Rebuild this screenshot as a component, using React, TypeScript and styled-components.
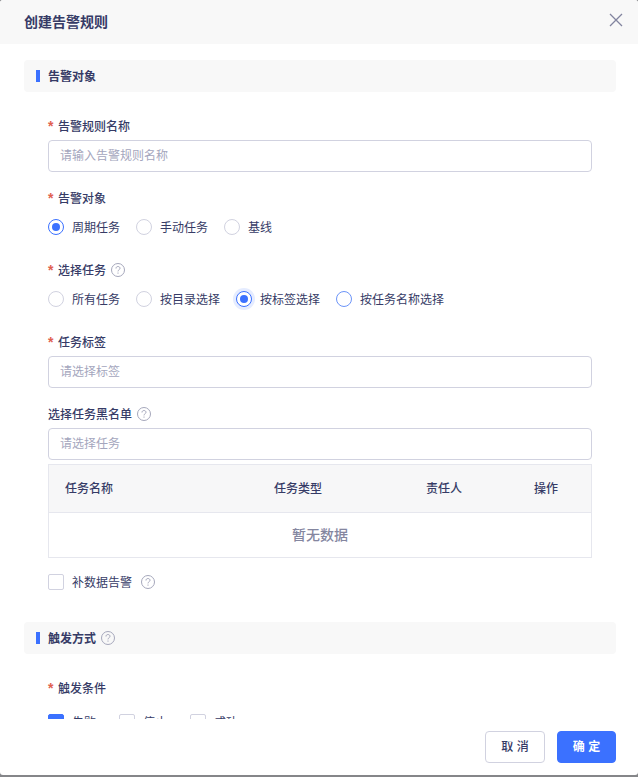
import React from "react";
import styled, { createGlobalStyle, css } from "styled-components";

const INK = "#363b66";
const BLUE = "#3b71ff";
const LINE = "#d1d2e0";

const GlobalStyle = createGlobalStyle`
  * { box-sizing: border-box; }
  body {
    margin: 0;
    background: #858689;
    color: ${INK};
    font: 400 12px/18px "Noto Sans CJK SC", sans-serif;
  }
`;

const Dialog = styled.div`
  width: 638px;
  height: 775px;
  display: flex;
  flex-direction: column;
  overflow: hidden;
  background: #fff;
  border-radius: 3px;
`;

const Header = styled.header`
  flex: 0 0 44px;
  display: flex;
  align-items: center;
  justify-content: space-between;
  padding: 0 15px 0 24px;
  background: #f8f8f8;
`;

const Title = styled.h1`
  margin: 0;
  font: 700 14px/20px "Liberation Sans", "Noto Sans CJK SC", sans-serif;
`;

const CloseButton = styled.button`
  display: flex;
  margin: 0 0 4px;
  padding: 0;
  border: 0;
  background: none;
`;

const Body = styled.main`
  flex: 1;
  min-height: 0;
  overflow: hidden;
  padding: 16px 22px 0 24px;
`;

const SectionBar = styled.h2`
  display: flex;
  align-items: center;
  height: 32px;
  margin: 0;
  padding: 0 12px;
  border-radius: 4px;
  background: #f8f8f8;
  font-size: 12px;
  font-weight: 700;

  &::before {
    content: "";
    width: 4px;
    height: 12px;
    margin-right: 8px;
    background: ${BLUE};
  }
`;

const Fields = styled.div`
  padding: 20px 24px 32px;
`;

const Field = styled.div`
  margin-bottom: 12px;
`;

const Label = styled.div`
  display: flex;
  align-items: center;
  height: 28px;
  font-weight: 500;
`;

const Star = styled.span`
  width: 10px;
  color: #e0604f;
  font: 700 14px/18px "Liberation Sans", sans-serif;
  padding-bottom: 1px;
`;

const Input = styled.input`
  display: block;
  width: 100%;
  height: 32px;
  padding: 0 11px;
  border: 1px solid ${LINE};
  border-radius: 4px;
  background: #fff;
  color: ${INK};
  font: 400 12px/18px "Liberation Sans", "Noto Sans CJK SC", sans-serif;
  outline: none;

  &::placeholder { color: #a4a6bd; opacity: 1; }
`;

const RadioRow = styled.div`
  display: flex;
  gap: 16px;
  height: 32px;
  padding-bottom: 2px;
`;

const Option = styled.label`
  display: flex;
  align-items: center;
  gap: 8px;
`;

type RadioState = "off" | "hover" | "on" | "focus";

const RadioDot = styled.span<{ $state: RadioState }>`
  display: flex;
  align-items: center;
  justify-content: center;
  width: 16px;
  height: 16px;
  border: 1px solid ${(p) => (p.$state === "off" ? LINE : p.$state === "hover" ? "#6c94f8" : BLUE)};
  border-radius: 50%;
  background: #fff;
  ${(p) => p.$state === "focus" && css`box-shadow: 0 0 0 3px #e5ecff;`}

  &::after {
    content: "";
    width: 8px;
    height: 8px;
    border-radius: 50%;
    background: ${(p) => (p.$state === "on" || p.$state === "focus" ? BLUE : "transparent")};
  }
`;

const CheckBox = styled.span<{ $checked?: boolean }>`
  width: 16px;
  height: 16px;
  border: 1px solid ${(p) => (p.$checked ? BLUE : LINE)};
  border-radius: 2px;
  background: ${(p) => (p.$checked ? BLUE : "#fff")};
`;

const CheckRow = styled.div<{ $gap?: number }>`
  display: flex;
  align-items: center;
  gap: ${(p) => p.$gap ?? 0}px;
  height: 16px;
`;

const Table = styled.div`
  margin: 4px 0 16px;
  border: 1px solid #e6e7ee;
`;

const TableHead = styled.div`
  display: grid;
  grid-template-columns: 209px 152px 108px 1fr;
  align-items: center;
  height: 48px;
  padding: 0 0 1px 16px;
  border-bottom: 1px solid #e6e7ee;
  background: #f7f7f8;
  font-weight: 500;
`;

const Empty = styled.div`
  height: 44px;
  font: 500 14px/44px "Liberation Sans", "Noto Sans CJK SC", sans-serif;
  text-align: center;
  color: #84869f;
`;

const Footer = styled.footer`
  flex: 0 0 56px;
  display: flex;
  justify-content: flex-end;
  gap: 12px;
  padding: 12px 22px;
`;

const Button = styled.button<{ $primary?: boolean }>`
  width: ${(p) => (p.$primary ? 59 : 60)}px;
  height: 32px;
  padding: 0;
  border: 1px solid ${(p) => (p.$primary ? BLUE : LINE)};
  border-radius: 4px;
  background: ${(p) => (p.$primary ? BLUE : "#fff")};
  color: ${(p) => (p.$primary ? "#fff" : INK)};
  font: ${(p) => (p.$primary ? 700 : 500)} 12px/18px "Liberation Sans", "Noto Sans CJK SC", sans-serif;
`;

const HelpSvg = styled.svg<{ $left: number }>`
  flex: none;
  margin-left: ${(p) => p.$left}px;
`;

const Help = ({ left = 5 }: { left?: number }) => (
  <HelpSvg $left={left} width="14" height="14" viewBox="0 0 14 14" fill="none" stroke="#a5a7bb">
    <circle cx="7" cy="7" r="6.5" />
    <path d="M5 5.500C5 4.200 5.800 3.500 7 3.500s2 .8 2 1.800C9 6.700 7 6.700 7 8.400" />
    <path d="M7 9.500v1.200" />
  </HelpSvg>
);

const FieldLabel = ({ text, required, help }: { text: string; required?: boolean; help?: boolean }) => (
  <Label>
    {required && <Star>*</Star>}
    {text}
    {help && <Help />}
  </Label>
);

const Radios = ({ items }: { items: [string, RadioState][] }) => (
  <RadioRow>
    {items.map(([text, state]) => (
      <Option key={text}>
        <RadioDot $state={state} />
        {text}
      </Option>
    ))}
  </RadioRow>
);

export default function App() {
  return (
    <>
      <GlobalStyle />
      <Dialog>
        <Header>
          <Title>创建告警规则</Title>
          <CloseButton aria-label="关闭">
            <svg width="14" height="14" viewBox="0 0 14 14" fill="none" stroke="#82849f" strokeWidth="1.3">
              <path d="M1 1l12 12M13 1L1 13" />
            </svg>
          </CloseButton>
        </Header>
        <Body>
          <SectionBar>告警对象</SectionBar>
          <Fields>
            <Field>
              <FieldLabel text="告警规则名称" required />
              <Input placeholder="请输入告警规则名称" />
            </Field>
            <Field>
              <FieldLabel text="告警对象" required />
              <Radios items={[["周期任务", "on"], ["手动任务", "off"], ["基线", "off"]]} />
            </Field>
            <Field>
              <FieldLabel text="选择任务" required help />
              <Radios
                items={[
                  ["所有任务", "off"],
                  ["按目录选择", "off"],
                  ["按标签选择", "focus"],
                  ["按任务名称选择", "hover"],
                ]}
              />
            </Field>
            <Field>
              <FieldLabel text="任务标签" required />
              <Input placeholder="请选择标签" />
            </Field>
            <FieldLabel text="选择任务黑名单" help />
            <Input placeholder="请选择任务" />
            <Table>
              <TableHead>
                <span>任务名称</span>
                <span>任务类型</span>
                <span>责任人</span>
                <span>操作</span>
              </TableHead>
              <Empty>暂无数据</Empty>
            </Table>
            <CheckRow>
              <Option><CheckBox />补数据告警</Option>
              <Help left={9} />
            </CheckRow>
          </Fields>
          <SectionBar>触发方式<Help /></SectionBar>
          <Fields>
            <Field>
              <FieldLabel text="触发条件" required />
            </Field>
            <CheckRow $gap={23}>
              <Option><CheckBox $checked />失败</Option>
              <Option><CheckBox />停止</Option>
              <Option><CheckBox />成功</Option>
            </CheckRow>
          </Fields>
        </Body>
        <Footer>
          <Button>取 消</Button>
          <Button $primary>确 定</Button>
        </Footer>
      </Dialog>
    </>
  );
}
